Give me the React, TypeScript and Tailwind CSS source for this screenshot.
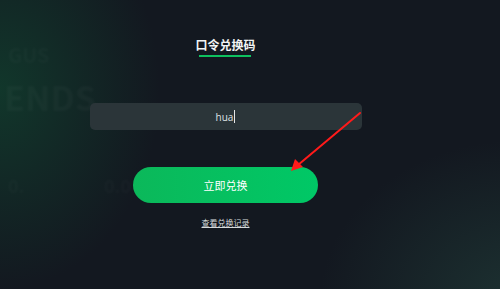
import React from "react";

export default function App() {
  return (
    <div
      className="relative w-[500px] h-[289px] overflow-hidden bg-[#131820]"
      style={{ fontFamily: '"Noto Sans CJK SC", "Noto Sans", sans-serif' }}
    >
      {/* background glows */}
      <div className="absolute inset-0 bg-[radial-gradient(ellipse_160px_200px_at_0px_90px,rgba(16,80,52,0.55),transparent)]" />
      <div className="absolute inset-0 bg-[radial-gradient(ellipse_200px_160px_at_520px_300px,rgba(40,80,70,0.45),transparent)]" />
      {/* faint background text */}
      <div className="absolute left-[8px] top-[44px] text-[20px] font-bold leading-[22px] text-[#ffffff] opacity-[0.02] blur-[1px]">
        GUS
      </div>
      <div className="absolute left-[4px] top-[80px] text-[34px] font-bold leading-[34px] text-[#ffffff] opacity-[0.025] blur-[1px]">
        ENDS
      </div>
      <div className="absolute left-[8px] top-[176px] text-[18px] font-bold leading-none text-[#ffffff] opacity-[0.02] blur-[1px]">
        0.
      </div>
      <div className="absolute left-[104px] top-[176px] text-[18px] font-bold leading-none text-[#ffffff] opacity-[0.02] blur-[1px]">
        0.0
      </div>

      <div className="relative flex w-[451px] flex-col items-center pt-[37px]">
        <div className="flex flex-col items-center">
          <span className="text-[12px] leading-[16px] font-bold text-[#f2f4f5]">口令兑换码</span>
          <div className="mt-[2px] h-[2px] w-[52px] bg-[#0ec15f]" />
        </div>

        <div className="mt-[46px] flex h-[27px] w-[272px] items-center justify-center rounded-[5px] bg-[#2b3539]">
          <span className="text-[10px] leading-none text-[#dfe3e5]" style={{ fontFamily: '"Open Sans", sans-serif' }}>
            hua
          </span>
          <span className="ml-[1px] h-[13px] w-px bg-[#e5e7e8]" />
        </div>

        <div className="mt-[37px] flex h-[36px] w-[185px] items-center justify-center rounded-full bg-gradient-to-r from-[#0bb85a] to-[#00c866]">
          <span className="text-[11px] leading-none text-[#ffffff]">立即兑换</span>
        </div>

        <span className="mt-[15px] text-[8px] leading-[10px] text-[#d6dadc] underline underline-offset-[1px]">
          查看兑换记录
        </span>
      </div>

      {/* red arrow */}
      <svg className="absolute left-0 top-0" width="500" height="289" viewBox="0 0 500 289">
        <line x1="360" y1="113" x2="298" y2="165" stroke="#ff1a1a" strokeWidth="2" strokeLinecap="round" />
        <polygon points="291,171 295,159 303,167" fill="#ff1a1a" />
      </svg>
    </div>
  );
}
